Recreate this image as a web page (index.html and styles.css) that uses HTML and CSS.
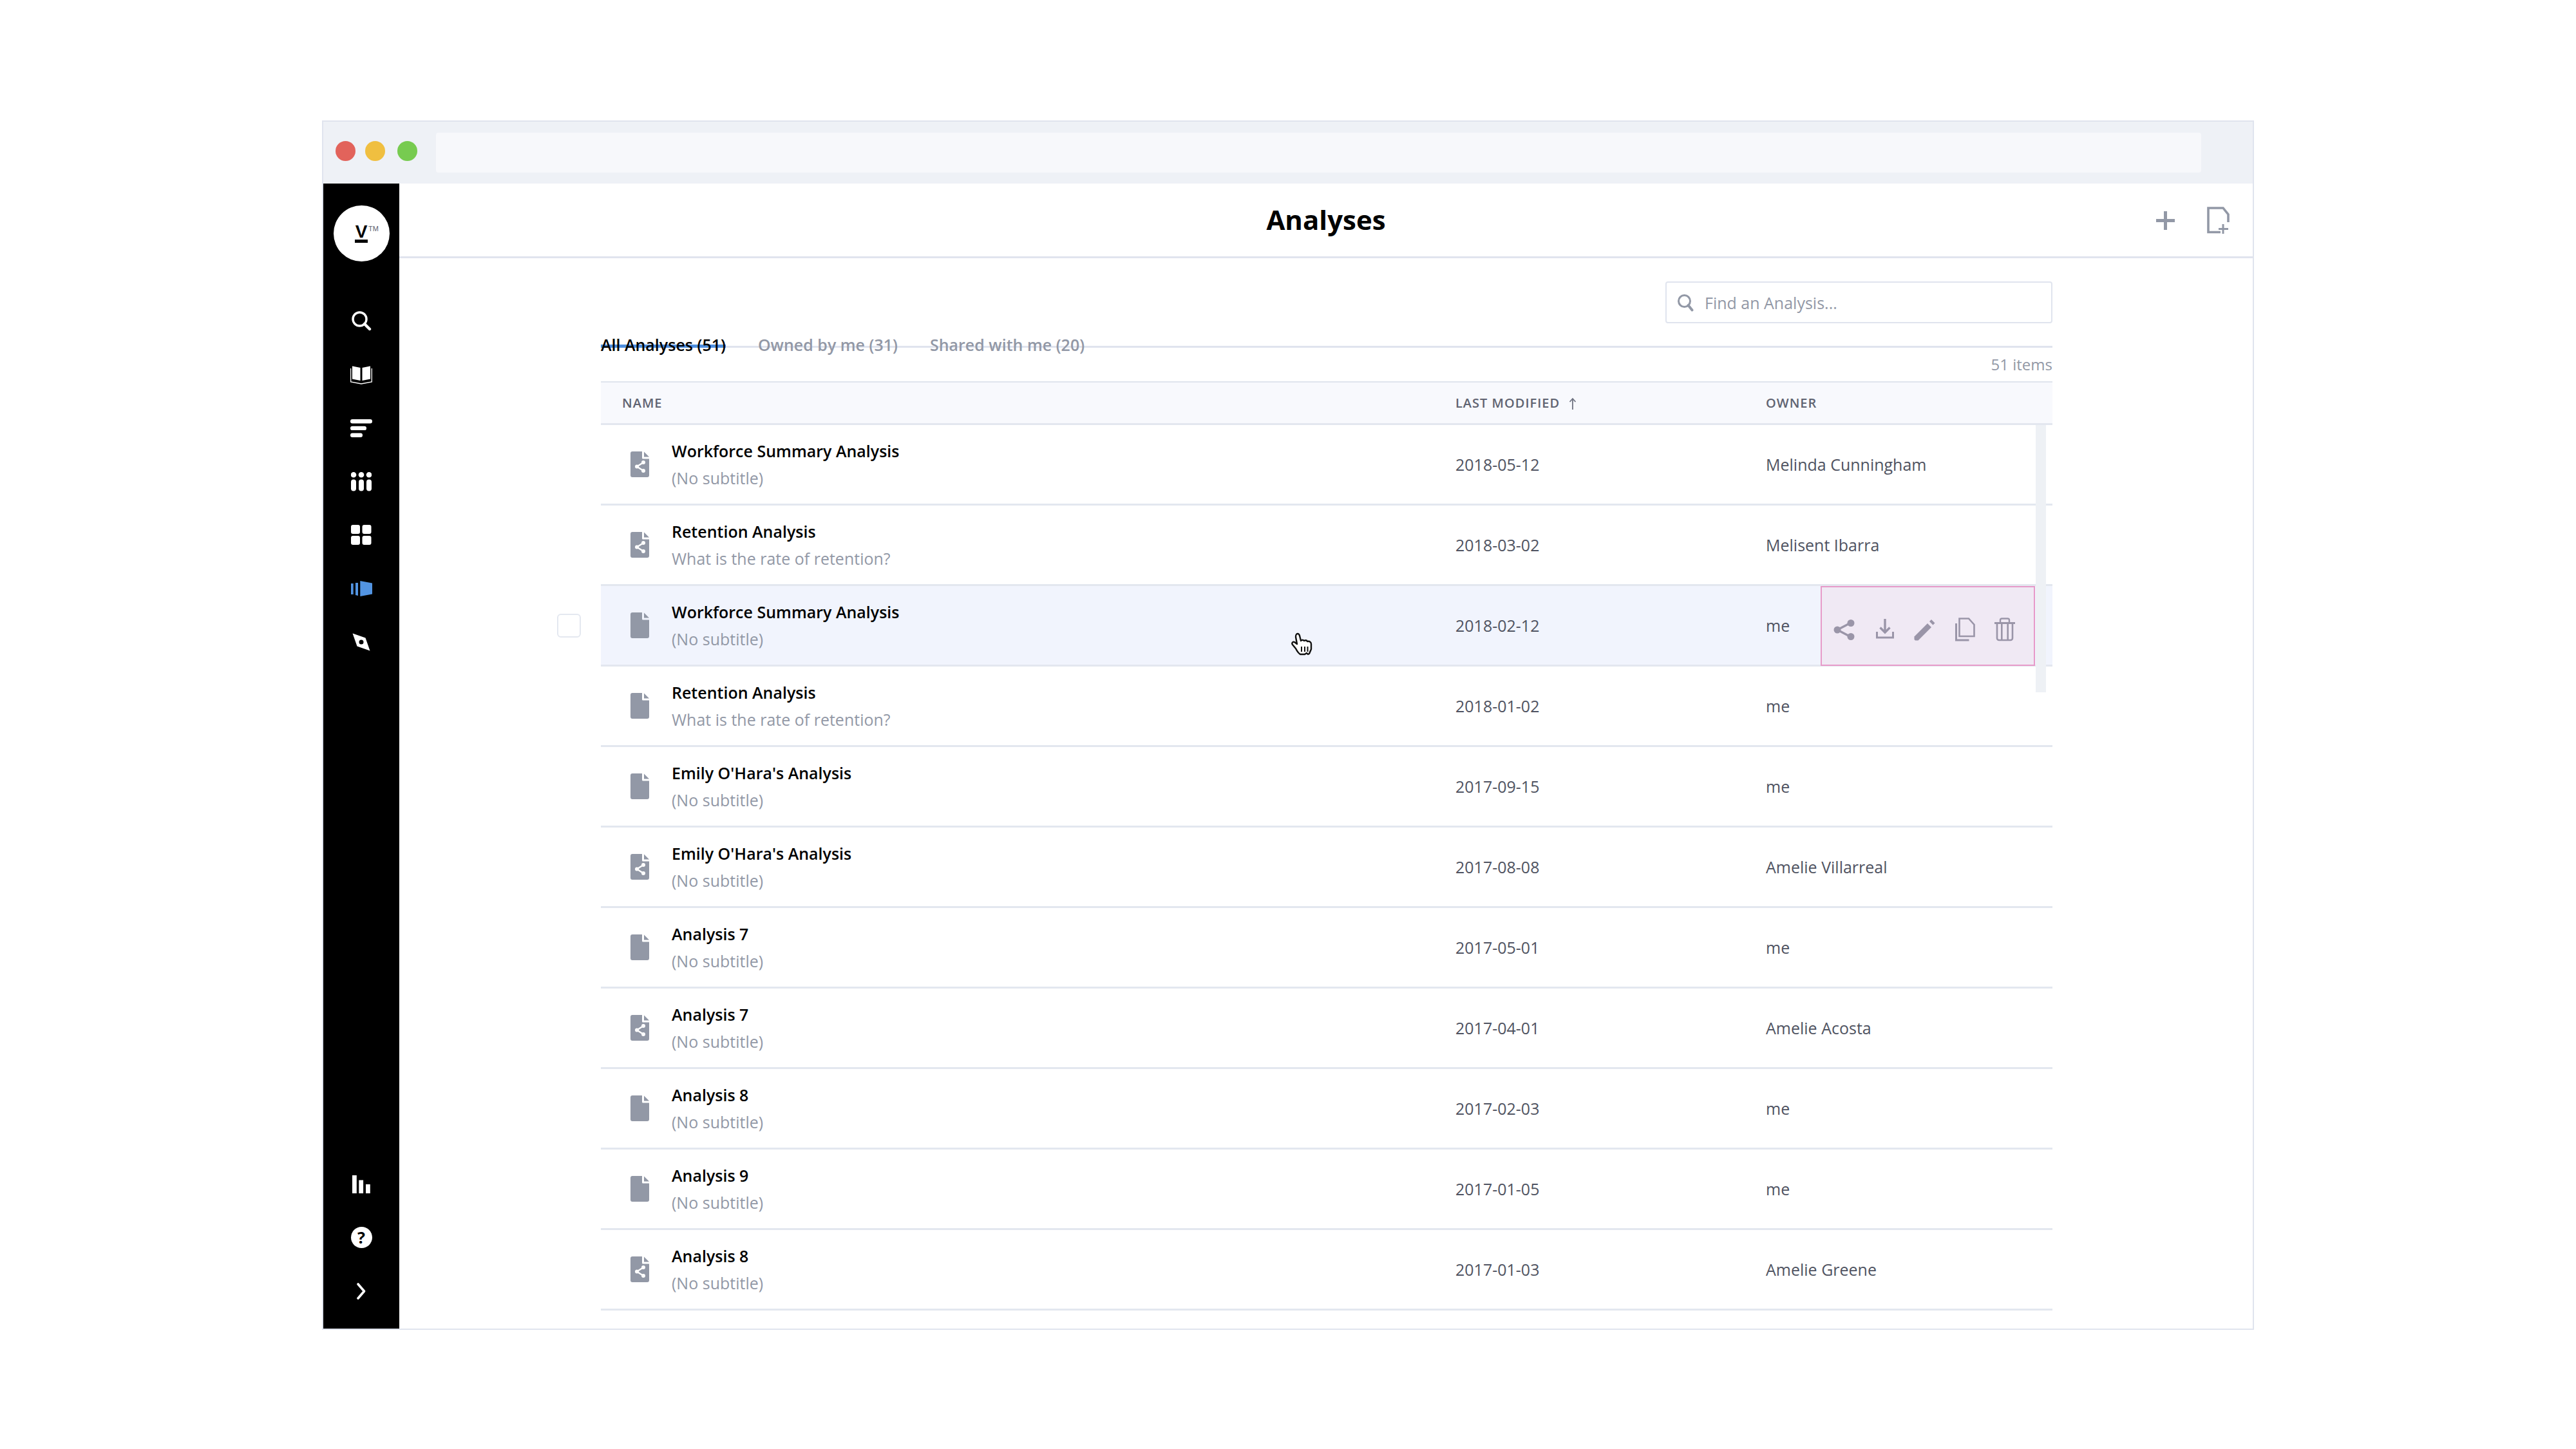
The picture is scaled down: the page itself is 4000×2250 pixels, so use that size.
FILE: index.html
```html
<!DOCTYPE html>
<html>
  <head>
    <title>Analyses</title>
    <meta http-equiv="Content-Type" content="text/html; charset=UTF-8">
    <link rel="stylesheet" href="styles.css">
  </head>

  <body>
    <svg class="defs" width="0" height="0">
      <symbol id="filePlain" viewBox="0 0 29 40">
        <path d="M3 0H18V10a1.5 1.5 0 0 0 1.5 1.5H29V37a3 3 0 0 1-3 3H3a3 3 0 0 1-3-3V3a3 3 0 0 1 3-3Z" fill="#9298a6"/>
        <path d="M21 0.5L29 8.5H21Z" fill="#9298a6"/>
      </symbol>
      <symbol id="fileShared" viewBox="0 0 29 40">
        <path d="M3 0H18V10a1.5 1.5 0 0 0 1.5 1.5H29V37a3 3 0 0 1-3 3H3a3 3 0 0 1-3-3V3a3 3 0 0 1 3-3Z" fill="#9298a6"/>
        <path d="M21 0.5L29 8.5H21Z" fill="#9298a6"/>
        <path d="M20 17L10 23.5L20 30" fill="none" stroke="#fff" stroke-width="2.4"/>
        <circle cx="20" cy="17" r="3" fill="#fff"/>
        <circle cx="10" cy="23.5" r="3" fill="#fff"/>
        <circle cx="20" cy="30" r="3" fill="#fff"/>
      </symbol>
    </svg>

    <div class="window">
      <div class="titlebar">
        <span class="light red"></span>
        <span class="light yellow"></span>
        <span class="light green"></span>
        <div class="address"></div>
      </div>

      <div class="app">
        <nav class="sidebar">
          <div class="logo">
            <span class="logoMark">V<span class="logoTm">TM</span></span>
          </div>

          <div class="navItem">
            <svg width="34" height="34" viewBox="0 0 34 34"><circle cx="14.5" cy="13.5" r="10.5" fill="none" stroke="#fff" stroke-width="3.4"/><path d="M22 21L30 29" stroke="#fff" stroke-width="4.4" stroke-linecap="round"/></svg>
          </div>
          <div class="navItem">
            <svg width="34" height="30" viewBox="0 0 34 30"><path d="M3 1.5L15.5 4V24L3 21.5Z M31 1.5L18.5 4V24L31 21.5Z" fill="#fff"/><path d="M0.7 5V26L17 29L33.3 26V5" fill="none" stroke="#fff" stroke-width="1.3"/></svg>
          </div>
          <div class="navItem">
            <svg width="34" height="28" viewBox="0 0 34 28"><rect x="0" y="0" width="34" height="6.4" rx="3.2" fill="#fff"/><rect x="0" y="10.7" width="25" height="6.4" rx="3.2" fill="#fff"/><rect x="0" y="21.5" width="19" height="6.4" rx="3.2" fill="#fff"/></svg>
          </div>
          <div class="navItem">
            <svg width="32" height="30" viewBox="0 0 32 30"><g fill="#fff"><circle cx="4" cy="4.3" r="4.3"/><circle cx="16" cy="4.3" r="4.3"/><circle cx="28" cy="4.3" r="4.3"/><rect x="0" y="11.5" width="8" height="18" rx="4"/><rect x="12" y="11.5" width="8" height="18" rx="4"/><rect x="24" y="11.5" width="8" height="18" rx="4"/></g></svg>
          </div>
          <div class="navItem">
            <svg width="32" height="31" viewBox="0 0 32 31"><g fill="#fff"><rect x="0" y="0" width="14" height="14" rx="3"/><rect x="17.5" y="0" width="14" height="14" rx="3"/><rect x="0" y="17" width="14" height="14" rx="3"/><rect x="17.5" y="17" width="14" height="14" rx="3"/></g></svg>
          </div>
          <div class="navItem">
            <svg width="33" height="24" viewBox="0 0 33 24"><g fill="#5294e2"><path d="M0 4H3.7V21H0Z"/><path d="M7 3H11V23L7 22Z"/><path d="M14.3 0L33.3 3.5V20.5L14.3 24Z"/></g></svg>
          </div>
          <div class="navItem">
            <svg width="28" height="28" viewBox="0 0 28 28"><path fill-rule="evenodd" d="M0.5 0.5L20.5 7.5L27.5 27.5L7.5 20.5ZM14 10.5a3.5 3.5 0 1 0 0 7a3.5 3.5 0 1 0 0-7Z" fill="#fff"/></svg>
          </div>

          <div class="navBottom">
            <div class="navItem">
              <svg width="28" height="28" viewBox="0 0 28 28"><g fill="#fff"><rect x="0" y="0" width="6.8" height="28"/><rect x="10.3" y="7.5" width="6.8" height="20.5"/><rect x="21" y="14" width="6.8" height="14"/></g></svg>
            </div>
            <div class="navItem">
              <span class="help">?</span>
            </div>
            <div class="navItem">
              <svg width="14" height="26" viewBox="0 0 14 26"><path d="M2 2L11.5 13L2 24" fill="none" stroke="#fff" stroke-width="3.6" stroke-linecap="round" stroke-linejoin="round"/></svg>
            </div>
          </div>
        </nav>

        <div class="main">
          <header class="header">
            <h1>Analyses</h1>
            <div class="headerIcons">
              <svg width="29" height="29" viewBox="0 0 29 29"><path d="M14.5 0V29M0 14.5H29" stroke="#9298a6" stroke-width="5"/></svg>
              <svg width="35" height="42" viewBox="0 0 35 42"><path d="M21 39.5H2V2H25L33 12V24" fill="none" stroke="#9298a6" stroke-width="3.6"/><path d="M25 27V42M18 34.5H33" stroke="#9298a6" stroke-width="3"/></svg>
            </div>
          </header>

          <div class="content">
            <div class="toolbar">
              <div class="tabs">
                <div class="tab active">All Analyses (51)</div>
                <div class="tab">Owned by me (31)</div>
                <div class="tab">Shared with me (20)</div>
              </div>
              <div class="search">
                <svg width="26" height="28" viewBox="0 0 26 28"><circle cx="11.5" cy="11.5" r="9" fill="none" stroke="#9298a6" stroke-width="3"/><path d="M17.5 18L23.5 25.5" stroke="#9298a6" stroke-width="4" stroke-linecap="round"/></svg>
                <span>Find an Analysis...</span>
              </div>
            </div>
            <div class="itemCount">51 items</div>

            <div class="table">
              <div class="row headRow">
                <div class="colName">NAME</div>
                <div class="sorted">LAST MODIFIED
                  <svg width="12" height="20" viewBox="0 0 12 20"><path d="M6 19V2M1.5 7L6 2L10.5 7" fill="none" stroke="#6f7382" stroke-width="1.8"/></svg>
                </div>
                <div>OWNER</div>
              </div>

              <div class="scrollThumb"></div>

              <div class="row">
                <div class="colName"><svg class="fileIcon"><use href="#fileShared"/></svg><div><div class="name">Workforce Summary Analysis</div><div class="sub">(No subtitle)</div></div></div>
                <div class="cell">2018-05-12</div>
                <div class="cell">Melinda Cunningham</div>
              </div>
              <div class="row">
                <div class="colName"><svg class="fileIcon"><use href="#fileShared"/></svg><div><div class="name">Retention Analysis</div><div class="sub">What is the rate of retention?</div></div></div>
                <div class="cell">2018-03-02</div>
                <div class="cell">Melisent Ibarra</div>
              </div>
              <div class="row hovered">
                <span class="check"></span>
                <div class="colName"><svg class="fileIcon"><use href="#filePlain"/></svg><div><div class="name">Workforce Summary Analysis</div><div class="sub">(No subtitle)</div></div></div>
                <div class="cell">2018-02-12</div>
                <div class="cell">me</div>
                <div class="actions">
                  <svg width="40" height="40" viewBox="0 0 40 40"><path d="M29 9L8 20L29 31" fill="none" stroke="#9a95a8" stroke-width="3.4"/><circle cx="29" cy="9.5" r="5.5" fill="#9a95a8"/><circle cx="8" cy="20" r="5.5" fill="#9a95a8"/><circle cx="29" cy="30.5" r="5.5" fill="#9a95a8"/></svg>
                  <svg width="40" height="40" viewBox="0 0 40 40"><path d="M20 3V24M12.5 16.5L20 24L27.5 16.5" fill="none" stroke="#9a95a8" stroke-width="3.4"/><path d="M7.5 23V32H32.5V23" fill="none" stroke="#9a95a8" stroke-width="3"/></svg>
                  <svg width="40" height="40" viewBox="0 0 40 40"><path d="M3.500 30.500L24 10L30 16L9.500 36.500H5L3.500 35Z" fill="#9a95a8"/><path d="M27 7L30 4L35.500 9.500L32.500 12.500Z" fill="#9a95a8"/></svg>
                  <svg width="40" height="40" viewBox="0 0 40 40"><path d="M11.500 2.500H26L34.500 12V30H11.500Z" fill="none" stroke="#9a95a8" stroke-width="2.600"/><path d="M6.500 10V36H26.500" fill="none" stroke="#9a95a8" stroke-width="3"/></svg>
                  <svg width="40" height="40" viewBox="0 0 40 40"><path d="M4 9.500H36" stroke="#9a95a8" stroke-width="3"/><path d="M13 9V5a2.500 2.500 0 0 1 2.500-2.500H24.500a2.500 2.500 0 0 1 2.500 2.500V9" fill="none" stroke="#9a95a8" stroke-width="2.400"/><path d="M8 10V33a3 3 0 0 0 3 3H29a3 3 0 0 0 3-3V10M15.300 11V36M24.700 11V36" fill="none" stroke="#9a95a8" stroke-width="2.600"/></svg>
                </div>
              </div>
              <div class="row">
                <div class="colName"><svg class="fileIcon"><use href="#filePlain"/></svg><div><div class="name">Retention Analysis</div><div class="sub">What is the rate of retention?</div></div></div>
                <div class="cell">2018-01-02</div>
                <div class="cell">me</div>
              </div>
              <div class="row">
                <div class="colName"><svg class="fileIcon"><use href="#filePlain"/></svg><div><div class="name">Emily O'Hara's Analysis</div><div class="sub">(No subtitle)</div></div></div>
                <div class="cell">2017-09-15</div>
                <div class="cell">me</div>
              </div>
              <div class="row">
                <div class="colName"><svg class="fileIcon"><use href="#fileShared"/></svg><div><div class="name">Emily O'Hara's Analysis</div><div class="sub">(No subtitle)</div></div></div>
                <div class="cell">2017-08-08</div>
                <div class="cell">Amelie Villarreal</div>
              </div>
              <div class="row">
                <div class="colName"><svg class="fileIcon"><use href="#filePlain"/></svg><div><div class="name">Analysis 7</div><div class="sub">(No subtitle)</div></div></div>
                <div class="cell">2017-05-01</div>
                <div class="cell">me</div>
              </div>
              <div class="row">
                <div class="colName"><svg class="fileIcon"><use href="#fileShared"/></svg><div><div class="name">Analysis 7</div><div class="sub">(No subtitle)</div></div></div>
                <div class="cell">2017-04-01</div>
                <div class="cell">Amelie Acosta</div>
              </div>
              <div class="row">
                <div class="colName"><svg class="fileIcon"><use href="#filePlain"/></svg><div><div class="name">Analysis 8</div><div class="sub">(No subtitle)</div></div></div>
                <div class="cell">2017-02-03</div>
                <div class="cell">me</div>
              </div>
              <div class="row">
                <div class="colName"><svg class="fileIcon"><use href="#filePlain"/></svg><div><div class="name">Analysis 9</div><div class="sub">(No subtitle)</div></div></div>
                <div class="cell">2017-01-05</div>
                <div class="cell">me</div>
              </div>
              <div class="row">
                <div class="colName"><svg class="fileIcon"><use href="#fileShared"/></svg><div><div class="name">Analysis 8</div><div class="sub">(No subtitle)</div></div></div>
                <div class="cell">2017-01-03</div>
                <div class="cell">Amelie Greene</div>
              </div>
            </div>
          </div>
        </div>
      </div>

      <!-- pointer in the screenshot -->
      <svg class="cursor" width="34" height="36" viewBox="0 0 34 36">
        <path d="M8 3C10 1 12 2 13 5L15 13C17 11 19 12 20 13C22 12 24 12 25 14C28 13 31 15 31 18V26L28 33L26 34L24 32L21 34H14C11 32 9 29 7 25L2 19C0 16 3 14 5 15L9 18L7 7C7 5 7 4 8 3Z" fill="#fff" stroke="#111" stroke-width="2.400" stroke-linejoin="round"/>
        <path d="M16 22V30M21 22V30M25.500 22V30" stroke="#111" stroke-width="2"/>
      </svg>
    </div>
  </body>
</html>
```

FILE: styles.css
```css
html, body {
  margin: 0;
  background-color: white;
}
body {
  padding: 187px 500px 0;
  font-family: "Open Sans", sans-serif;
  color: #4f5361;
}
.defs { display: block; height: 0; }

.window {
  position: relative;
  box-sizing: border-box;
  width: 3000px;
  height: 1878px;
  border: 2px solid #e0e4ee;
  display: flex;
  flex-direction: column;
}

/* window chrome */
.titlebar {
  height: 96px;
  flex: none;
  padding: 17px 80px 0 19px;
  box-sizing: border-box;
  display: flex;
  align-items: flex-start;
  background-color: #eef1f6;
}
.light {
  width: 31px;
  height: 31px;
  margin-top: 13px;
  border-radius: 50%;
  flex: none;
}
.red { background-color: #e2635b; }
.yellow { background-color: #f0bf40; margin-left: 15px; }
.green { background-color: #77cb50; margin-left: 19px; }
.address {
  flex: 1;
  height: 62px;
  margin-left: 29px;
  border-radius: 4px;
  background-color: #f7f8fb;
}

.app {
  flex: 1;
  display: flex;
  min-height: 0;
}

/* left navigation */
.sidebar {
  width: 118px;
  flex: none;
  box-sizing: border-box;
  padding: 34px 0 17px;
  display: flex;
  flex-direction: column;
  align-items: center;
  background-color: black;
}
.logo {
  width: 87px;
  height: 87px;
  margin-bottom: 51px;
  flex: none;
  border-radius: 50%;
  background-color: white;
  display: flex;
  justify-content: center;
  align-items: center;
}
.logoMark {
  position: relative;
  width: 20px;
  height: 29px;
  box-sizing: border-box;
  border-bottom: 5px solid black;
  font: bold 28px/23px "Liberation Sans", sans-serif;
  color: black;
  text-align: center;
}
.logoTm {
  position: absolute;
  left: 21px;
  top: 0;
  font: 11px/14px "Liberation Sans", sans-serif;
  color: #5d6070;
}
.navItem {
  width: 100%;
  height: 83px;
  flex: none;
  display: flex;
  justify-content: center;
  align-items: center;
}
.navBottom {
  margin-top: auto;
  width: 100%;
}
.help {
  width: 33px;
  height: 33px;
  border-radius: 50%;
  background-color: white;
  color: black;
  font: bold 25px/33px "Open Sans", sans-serif;
  text-align: center;
}

/* page */
.main {
  flex: 1;
  min-width: 0;
}
.header {
  height: 116px;
  box-sizing: border-box;
  border-bottom: 3px solid #e0e4ee;
  position: relative;
  display: flex;
  justify-content: center;
  align-items: center;
}
h1 {
  margin: 0 0 2px;
  font-size: 42px;
  font-weight: 700;
  color: black;
}
.headerIcons {
  position: absolute;
  top: 36px;
  right: 36px;
  display: flex;
  align-items: center;
  gap: 50px;
}

.content {
  padding: 36px 0 0 313px;
  width: 2254px;
}
.toolbar {
  height: 103px;
  box-sizing: border-box;
  border-bottom: 3px solid #e0e4ee;
  display: flex;
  justify-content: space-between;
  align-items: flex-start;
}
.tabs {
  align-self: flex-end;
  display: flex;
  gap: 50px;
  margin-bottom: -3px;
}
.tab {
  height: 62px;
  box-sizing: border-box;
  padding-top: 40px;
  font-size: 25px;
  font-weight: 600;
  line-height: 34px;
  color: #9298a6;
}
.tab.active {
  border-bottom: 5px solid #4f8fdf;
  color: black;
}
.search {
  width: 601px;
  height: 65px;
  box-sizing: border-box;
  border: 2px solid #e0e4ee;
  border-radius: 4px;
  padding-left: 16px;
  display: flex;
  align-items: center;
  gap: 17px;
  font-size: 25px;
  color: #9298a6;
}
.itemCount {
  height: 52px;
  line-height: 52px;
  text-align: right;
  font-size: 24px;
  color: #9298a6;
}

/* list */
.table {
  position: relative;
  border-top: 2px solid #e0e4ee;
}
.row {
  position: relative;
  height: 125px;
  box-sizing: border-box;
  border-bottom: 3px solid #e3e7ef;
  display: grid;
  grid-template-columns: 1327px 482px 1fr;
  align-items: center;
  font-size: 25px;
}
.headRow {
  height: 66px;
  background-color: #f8f9fd;
  font-size: 20px;
  font-weight: 600;
  letter-spacing: 1px;
  color: #5f6371;
}
.headRow .colName { padding-left: 33px; }
.sorted svg {
  margin-left: 8px;
  vertical-align: -4px;
}
.colName {
  padding-left: 46px;
  display: flex;
  align-items: center;
  gap: 35px;
}
.fileIcon {
  width: 29px;
  height: 40px;
  flex: none;
}
.name {
  font-weight: 600;
  line-height: 42px;
  color: black;
}
.sub {
  line-height: 42px;
  color: #9298a6;
}
.hovered { background-color: #f1f4fd; }
.check {
  position: absolute;
  left: -68px;
  top: 43px;
  width: 37px;
  height: 37px;
  box-sizing: border-box;
  border: 2px solid #e4e8f0;
  border-radius: 6px;
  background-color: white;
}
.actions {
  position: absolute;
  left: 1894px;
  right: 27px;
  top: 0;
  bottom: -2px;
  box-sizing: border-box;
  border: 2px solid #e79ac9;
  background-color: #f0e9f4;
  padding: 11px 0 0 16px;
  display: flex;
  align-items: center;
  gap: 22px;
}
.scrollThumb {
  position: absolute;
  left: 2228px;
  top: 66px;
  width: 16px;
  height: 415px;
  background-color: #eef1f5;
  z-index: 1;
}
.cursor {
  position: absolute;
  left: 1503px;
  top: 793px;
}
```
